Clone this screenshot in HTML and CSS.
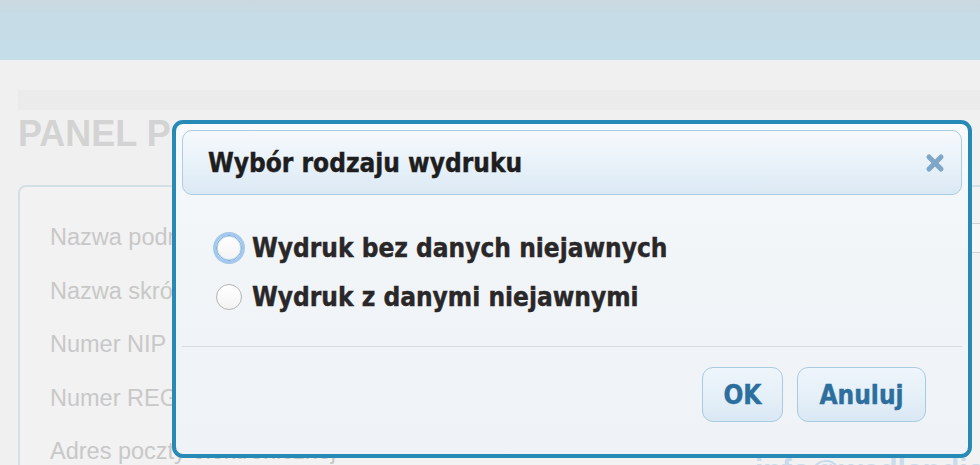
FILE: index.html
```html
<!DOCTYPE html>
<html lang="pl">
<head>
<meta charset="utf-8">
<title>Wybór rodzaju wydruku</title>
<link rel="stylesheet" href="styles.css">
</head>
<body>
<div class="topbar"></div>
<main class="page">
  <div class="band"></div>
  <h1 class="page-title">PANEL PODMIOTU SKŁADAJĄCEGO</h1>
  <section class="card">
    <div class="row"><span class="label">Nazwa podmiotu</span><span class="input"></span></div>
    <div class="row"><span class="label">Nazwa skrócona</span></div>
    <div class="row"><span class="label">Numer NIP</span></div>
    <div class="row"><span class="label">Numer REGON</span></div>
    <div class="row"><span class="label">Adres poczty elektronicznej</span><span class="value">info@wedlandia.pl</span></div>
  </section>
</main>

<div class="dialog" role="dialog" aria-labelledby="dlg-title">
  <div class="dialog-header">
    <h2 id="dlg-title" class="dialog-title">Wybór rodzaju wydruku</h2>
    <span class="dialog-close" aria-label="Zamknij">
      <svg width="20" height="20" viewBox="0 0 20 20"><path d="M4 4 L16 16 M16 4 L4 16" stroke="#7ea6c6" stroke-width="5" stroke-linecap="round" fill="none"/></svg>
    </span>
  </div>
  <div class="dialog-body">
    <label class="option"><input type="radio" name="print" class="radio radio-focus"><span>Wydruk bez danych niejawnych</span></label>
    <label class="option"><input type="radio" name="print" class="radio"><span>Wydruk z danymi niejawnymi</span></label>
  </div>
  <div class="dialog-footer">
    <button class="btn btn-ok">OK</button>
    <button class="btn btn-cancel">Anuluj</button>
  </div>
</div>
</body>
</html>
```

FILE: styles.css
```css
html, body {
  margin: 0;
  padding: 0;
}
body {
  width: 980px;
  height: 465px;
  overflow: hidden;
  background: #f0f0f0;
  font-family: "Liberation Sans", Arial, sans-serif;
  position: relative;
}
.topbar {
  height: 60px;
  background: linear-gradient(#ccd8df, #c6dce6 25%, #c4dde8);
}
.page {
  padding-left: 18px;
}
.band {
  margin-top: 30px;
  height: 20px;
  background: #ebebeb;
}
.page-title {
  margin: 3px 0 0 0;
  font-size: 36px;
  line-height: 41px;
  font-weight: bold;
  color: #d3d3d3;
  white-space: nowrap;
}
.card {
  margin-top: 31px;
  margin-right: -40px;
  border: 2px solid #d4dfe6;
  border-radius: 8px;
  padding: 24px 0 0 30px;
  background: #f2f2f2;
}
.row {
  height: 53.5px;
  display: grid;
  grid-template-columns: 705px 1fr;
  grid-template-rows: 53.5px;
  align-items: center;
}
.label {
  font-size: 23.5px;
  line-height: 53.5px;
  color: #c8c8c8;
  white-space: nowrap;
}
.input {
  margin-left: 210px;
  height: 28px;
  border: 1px solid #d2d2d2;
  background: #f6f6f6;
  border-radius: 3px;
}
.value {
  align-self: start;
  margin-top: 30px;
  font-size: 30px;
  line-height: 30px;
  font-weight: bold;
  color: #cadcec;
  white-space: nowrap;
}

/* dialog */
.dialog {
  position: absolute;
  left: 172px;
  top: 120px;
  width: 800px;
  height: 338px;
  box-sizing: border-box;
  border: 4px solid #2789b6;
  border-radius: 11px;
  padding: 6px;
  background: linear-gradient(#f8fafc, #f1f5f8 40%, #eff3f7);
  font-family: "DejaVu Sans Condensed", "DejaVu Sans", sans-serif;
  font-stretch: condensed;
  font-weight: bold;
  font-size: 26px;
}
.dialog-header {
  height: 65px;
  box-sizing: border-box;
  border: 1px solid #abcde1;
  border-radius: 10px;
  background: linear-gradient(#f6f9fc, #e9f2f9 50%, #dbe9f4);
  display: flex;
  align-items: center;
  justify-content: space-between;
  padding: 0 16px 0 25px;
}
.dialog-title {
  margin: 0;
  font-size: 26px;
  font-weight: bold;
  color: #1e1e1e;
  -webkit-text-stroke: 0.4px #1e1e1e;
}
.dialog-close {
  display: flex;
  width: 20px;
  height: 20px;
  filter: blur(0.4px);
}
.dialog-body {
  padding: 28.5px 0 0 34px;
  height: 152px;
  box-sizing: border-box;
  border-bottom: 1px solid #d6dce1;
}
.option {
  height: 49px;
  display: flex;
  align-items: center;
  gap: 10px;
  color: #2a2729;
  -webkit-text-stroke: 0.4px #2a2729;
}
.radio {
  appearance: none;
  -webkit-appearance: none;
  margin: 0;
  width: 26px;
  height: 26px;
  border-radius: 50%;
  border: 1px solid #b4b4b4;
  background: linear-gradient(#ffffff, #f3f3f3);
  box-sizing: border-box;
}
.radio-focus {
  border-color: #78aadb;
  box-shadow: 0 0 0 3px #a3c8ec, inset 0 0 0 1px #c6def2;
}
.dialog-footer {
  display: flex;
  justify-content: flex-end;
  gap: 14px;
  padding: 20px 36px 0 0;
}
.btn {
  height: 55px;
  box-sizing: border-box;
  border: 1px solid #a9cbe0;
  border-radius: 11px;
  background: linear-gradient(#eef5fb, #e6f0f8 50%, #d9e8f4);
  font-family: inherit;
  font-stretch: condensed;
  font-weight: bold;
  font-size: 26px;
  color: #2c6e9d;
  -webkit-text-stroke: 0.4px #2c6e9d;
  padding: 0;
}
.btn-ok { width: 81px; }
.btn-cancel { width: 129px; }
```
